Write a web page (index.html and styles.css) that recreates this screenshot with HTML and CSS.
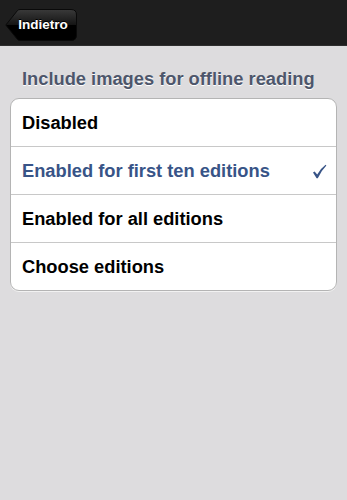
FILE: index.html
```html
<!DOCTYPE html>
<html>
<head>
<meta charset="utf-8">
<link rel="stylesheet" href="styles.css">
</head>
<body>
<div class="navbar">
  <div class="back">
    <svg class="back-shape" width="72" height="32" viewBox="0 0 72 32">
      <defs>
        <linearGradient id="g" x1="0" y1="0" x2="0" y2="1">
          <stop offset="0" stop-color="#3a3a3a"/>
          <stop offset="0.5" stop-color="#141414"/>
          <stop offset="0.51" stop-color="#000"/>
          <stop offset="1" stop-color="#000"/>
        </linearGradient>
      </defs>
      <path d="M0.8 16 L12.5 1.5 Q13.5 0.5 15 0.5 L66 0.5 Q71.5 0.5 71.5 6 L71.5 26 Q71.5 31.5 66 31.5 L15 31.5 Q13.5 31.5 12.5 30.5 Z" fill="url(#g)" stroke="#0a0a0a" stroke-width="1"/>
    </svg>
    <span class="back-label">Indietro</span>
  </div>
</div>
<div class="content">
  <div class="section-title">Include images for offline reading</div>
  <div class="group">
    <div class="row">Disabled</div>
    <div class="row selected"><span>Enabled for first ten editions</span>
      <svg class="check" width="15" height="15" viewBox="0 0 15 15">
        <path d="M1 8.5 L2.6 7.4 L5.2 10.6 Q8.5 4.5 13.6 0.8 L14.4 1.6 Q9.5 6.5 5.8 14.2 L4.6 14.2 Z" fill="#385487"/>
      </svg>
    </div>
    <div class="row">Enabled for all editions</div>
    <div class="row">Choose editions</div>
  </div>
</div>
</body>
</html>
```

FILE: styles.css
```css
html, body {
  margin: 0;
  padding: 0;
}
body {
  width: 347px;
  height: 500px;
  background: #dddcde;
  font-family: "Liberation Sans", Arial, sans-serif;
  overflow: hidden;
}
.navbar {
  height: 46px;
  background: #1e1e1e;
  border-bottom: 1px solid #2e2e2e;
  box-sizing: border-box;
  padding: 9px 0 0 5px;
}
.back {
  position: relative;
  width: 72px;
  height: 32px;
}
.back-shape {
  position: absolute;
  left: 0;
  top: 0;
}
.back-label {
  position: absolute;
  left: 8px;
  top: 0;
  width: 60px;
  text-align: center;
  line-height: 31px;
  color: #fff;
  font-weight: bold;
  font-size: 13.5px;
  text-shadow: 0 -1px 0 #000;
}
.content {
  padding: 23px 10px 0 10px;
}
.section-title {
  color: #4d566b;
  font-weight: bold;
  font-size: 18.3px;
  padding-left: 12px;
  height: 29px;
  line-height: 20px;
  text-shadow: 0 1px 0 #fff;
}
.group {
  background: #fff;
  border: 1px solid #b4b4b4;
  border-radius: 9px;
  box-shadow: 0 1px 0 #f2f2f2;
}
.row {
  height: 47px;
  display: flex;
  align-items: center;
  justify-content: space-between;
  padding: 0 9px 0 11px;
  font-weight: bold;
  font-size: 18.3px;
  color: #000;
  border-bottom: 1px solid #c8c8c8;
}
.row:last-child {
  border-bottom: none;
}
.row.selected {
  color: #385487;
}
.check {
  display: block;
  margin-top: 1px;
}
```
